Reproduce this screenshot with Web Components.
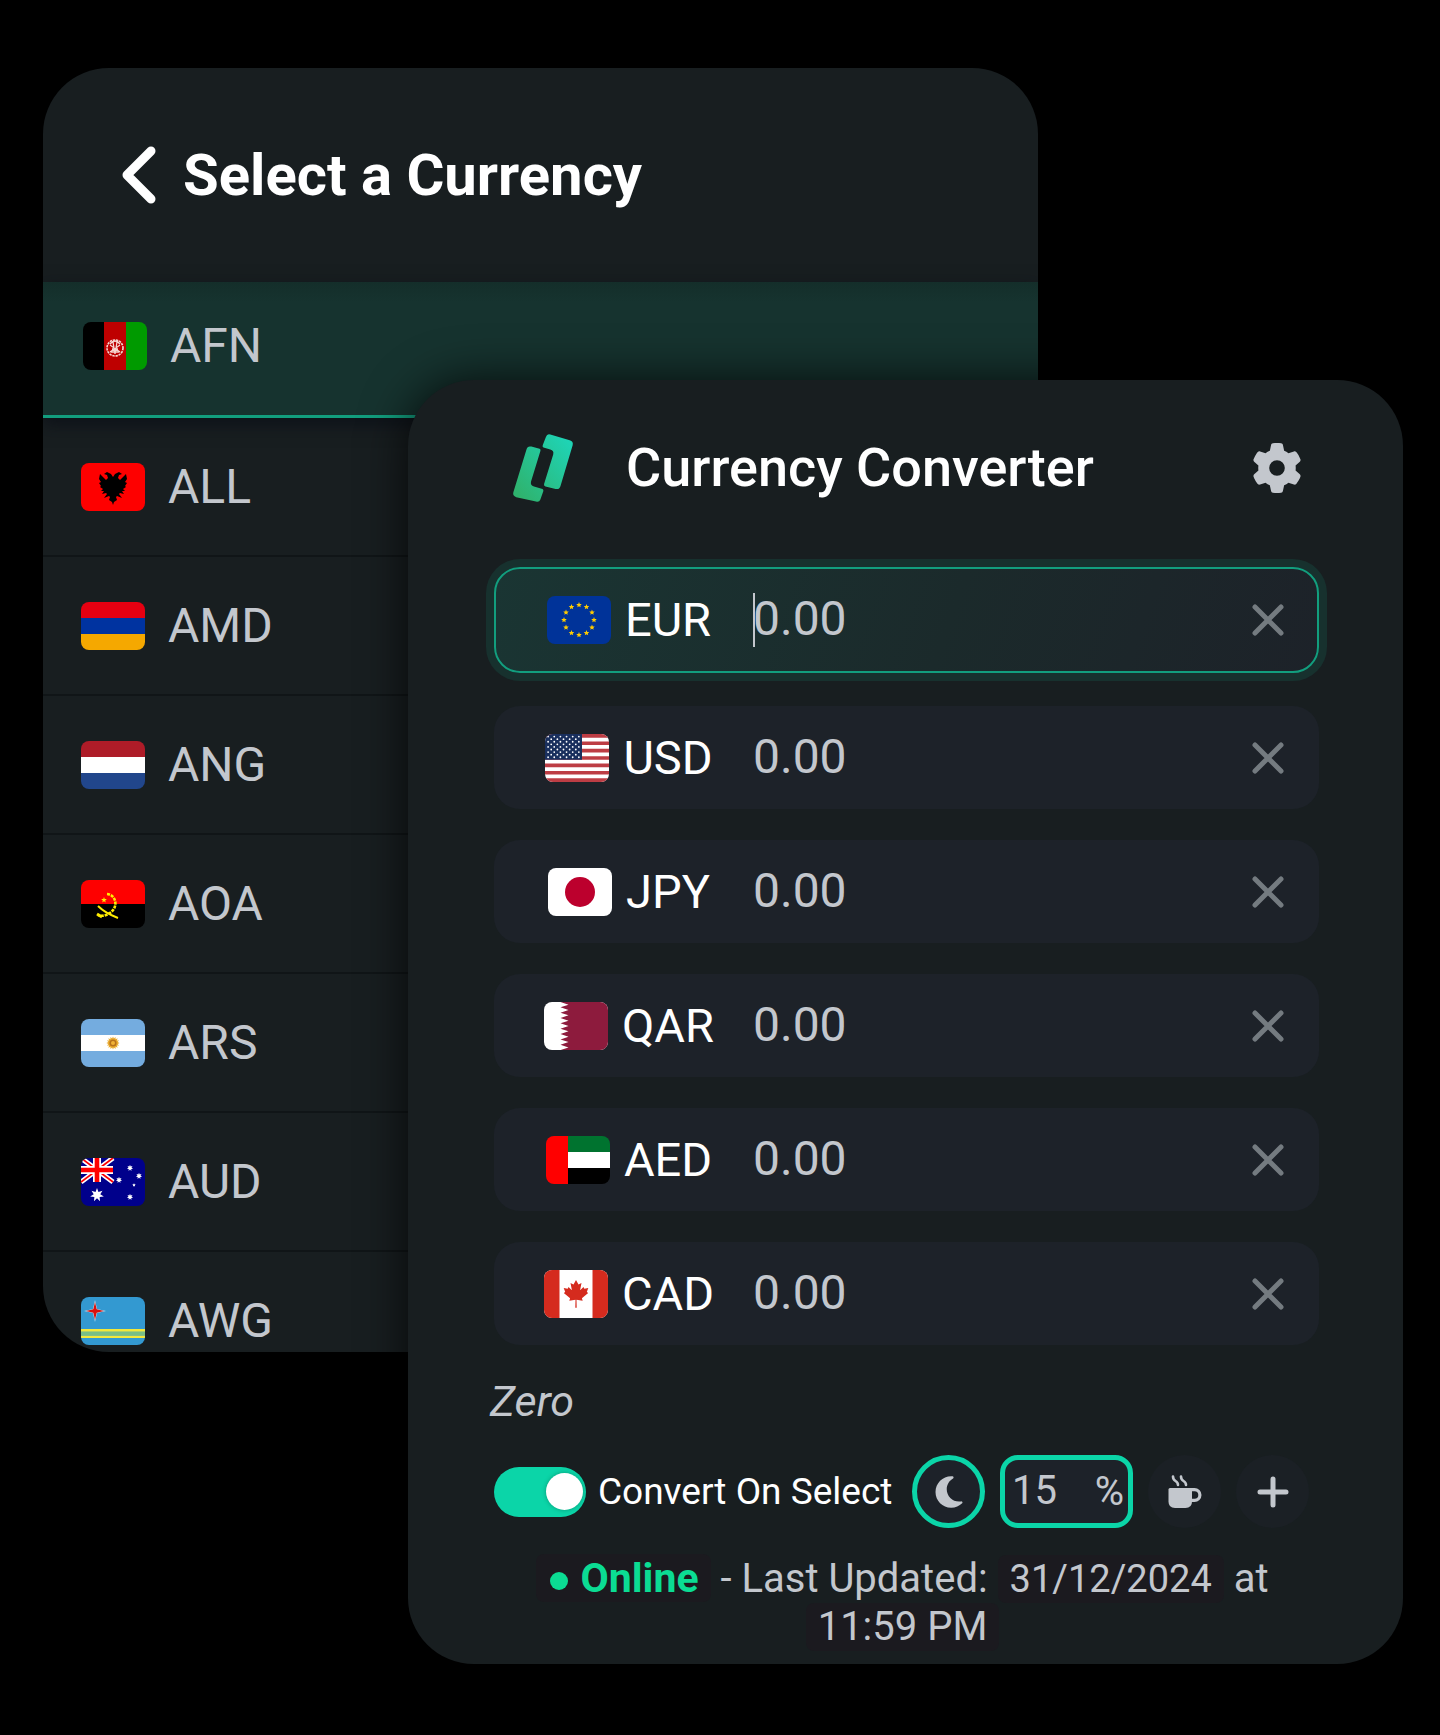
<!DOCTYPE html>
<html lang="en">
<head>
<meta charset="utf-8">
<meta name="viewport" content="width=device-width, initial-scale=1">
<title>Currency Converter</title>
<style>
  :root {
    --panel: #181e20;
    --field: #1d2229;
    --accent: #0bd5a8;
    --line: #129e7e;
    --muted: #c3c7cd;
  }
  body {
    margin: 0;
    background: #000;
    color: #fff;
    font-family: Roboto, "Noto Sans", sans-serif;
  }
</style>
</head>
<body>
<app-stage>
  <currency-picker slot="back">
    <currency-option code="AFN" selected></currency-option>
    <currency-option code="ALL"></currency-option>
    <currency-option code="AMD"></currency-option>
    <currency-option code="ANG"></currency-option>
    <currency-option code="AOA"></currency-option>
    <currency-option code="ARS"></currency-option>
    <currency-option code="AUD"></currency-option>
    <currency-option code="AWG"></currency-option>
  </currency-picker>
  <currency-converter slot="front">
    <currency-field code="EUR" active></currency-field>
    <currency-field code="USD"></currency-field>
    <currency-field code="JPY"></currency-field>
    <currency-field code="QAR"></currency-field>
    <currency-field code="AED"></currency-field>
    <currency-field code="CAD"></currency-field>
    <converter-toolbar slot="tools"></converter-toolbar>
    <sync-status slot="status"></sync-status>
  </currency-converter>
</app-stage>

<script>
const define = (name, render) => customElements.define(name, class extends HTMLElement {
  connectedCallback() {
    if (!this.shadowRoot) this.attachShadow({ mode: 'open' }).innerHTML = render(this);
  }
});

/* Star with n points, as a polygon's points attribute */
const star = (cx, cy, r, n, k) => {
  const p = [];
  for (let i = 0; i < n * 2; i++) {
    const a = Math.PI * i / n - Math.PI / 2, d = i % 2 ? r * k : r;
    p.push((cx + d * Math.cos(a)).toFixed(2) + ',' + (cy + d * Math.sin(a)).toFixed(2));
  }
  return p.join(' ');
};
const bars = (...c) => c.map((f, i) => `<path fill="${f}" d="M0 ${i * 16}h64v16H0z"/>`).join('');

/* Flags are drawn in a 64 x 48 box */
const FLAGS = {
  AFN: `<path d="M0 0h21v48H0z"/><path fill="#be0000" d="M21 0h22v48H21z"/><path fill="#009a00" d="M43 0h21v48H43z"/>
    <g fill="none" stroke="#f6d5d0"><circle cx="32" cy="26" r="8" stroke-width="1.6" stroke-dasharray="2.4 .8"/><path d="M27 22q5-6 10 0M27 23l10 7M37 23l-10 7M28 30h8M29 27h6M30 20l2 12 2-12" stroke-width="1.3"/></g>`,
  ALL: `<path fill="#fe0000" d="M0 0h64v48H0z"/>
    <path d="M32 14l-2-3-4-2-3 2 3 1 1 3-2 2-6-6-1 5 2 3-2 1 2 3-1 1 3 2-2 2 3 0-2 3 4-1 1 1-3 4 5-2 1 1-1 3 3 2 1 3 1-3 3-2-1-3 1-1 5 2-3-4 1-1 4 1-2-3 3 0-2-2 3-2-1-1 2-3-2-1 2-3-1-5-6 6-2-2 1-3 3-1-3-2-4 2z"/>`,
  AMD: bars('#e60011', '#0033a0', '#f5a800'),
  ANG: bars('#ae1c28', '#fff', '#21468b'),
  AOA: `<path fill="#fe0000" d="M0 0h64v24H0z"/><path d="M0 24h64v24H0z"/>
    <g fill="none" stroke="#ffec00" stroke-width="2.6"><path d="M26 14c10 1 12 15 1 20q-5 3-10 1" stroke-dasharray="3 1"/><path d="M17 26q7 7 20 12" stroke-width="2"/><path d="M16 34l5 3" stroke-width="3"/></g><polygon fill="#ffec00" points="${star(23, 20, 3, 5, .42)}"/>`,
  ARS: bars('#74acdf', '#fff', '#74acdf') + `<polygon fill="#e9a92a" points="${star(32, 24, 6.6, 16, .7)}"/><circle cx="32" cy="24" r="3.6" fill="#b8721c"/><circle cx="32" cy="24" r="2" fill="#f0b136"/>`,
  AUD: `<path fill="#00008b" d="M0 0h64v48H0z"/>
    <path stroke="#fff" stroke-width="5" d="M0 0l32 24M32 0L0 24"/><path stroke="#f00" stroke-width="1.7" d="M0 0l32 24M32 0L0 24"/>
    <path stroke="#fff" stroke-width="8" d="M16 0v24M0 12h32"/><path stroke="#f00" stroke-width="4.6" d="M16 0v24M0 12h32"/>
    <g fill="#fff"><polygon points="${star(16, 37, 7, 7, .48)}"/><polygon points="${star(49, 10, 3.2, 7, .5)}"/><polygon points="${star(38, 22, 3.2, 7, .5)}"/><polygon points="${star(58, 18, 3.2, 7, .5)}"/><polygon points="${star(49, 39, 3.2, 7, .5)}"/><polygon points="${star(53, 27, 1.8, 5, .5)}"/></g>`,
  AWG: `<path fill="#3399d1" d="M0 0h64v48H0z"/><path fill="#f4e83a" d="M0 32h64v2.8H0zM0 38.4h64v2.6H0z"/><path fill="#78bf86" d="M0 34.8h64v3.6H0z"/>
    <polygon fill="#c5e4f4" points="${star(14, 14, 11, 4, .26)}"/><polygon fill="#d9100d" points="${star(14, 14, 9, 4, .26)}"/>`,
  EUR: `<path fill="#039" d="M0 0h64v48H0z"/><g fill="#fc0">${Array.from({ length: 12 }, (_, i) =>
    `<polygon points="${star(32 + 15 * Math.cos(i * Math.PI / 6), 24 + 15 * Math.sin(i * Math.PI / 6), 2.9, 5, .46)}"/>`).join('')}</g>`,
  USD: `<path fill="#fff" d="M0 0h64v48H0z"/>${Array.from({ length: 7 }, (_, i) =>
    `<path fill="#bd3d44" d="M0 ${(i * 7.385).toFixed(2)}h64v3.69H0z"/>`).join('')}<path fill="#192f5d" d="M0 0h37v25.85H0z"/>
    <g fill="#fff">${Array.from({ length: 9 }, (_, r) => Array.from({ length: r % 2 ? 5 : 6 }, (_, c) =>
    `<circle cx="${3.1 + (r % 2 ? 3.1 : 0) + c * 6.15}" cy="${2.6 + r * 2.58}" r=".9"/>`).join('')).join('')}</g>`,
  JPY: `<path fill="#fff" d="M0 0h64v48H0z"/><circle cx="32" cy="24" r="15" fill="#bc002d"/>`,
  QAR: `<path fill="#fff" d="M0 0h64v48H0z"/><path fill="#8d1b3d" d="M64 0H16.5l8 2.67${'l-8 2.67 8 2.67'.repeat(8)}l-8 2.67H64z"/>`,
  AED: `<path fill="#00732f" d="M22 0h42v16H22z"/><path fill="#fff" d="M22 16h42v16H22z"/><path d="M22 32h42v16H22z"/><path fill="#f00" d="M0 0h22v48H0z"/>`,
  CAD: `<path fill="#fff" d="M0 0h64v48H0z"/><path fill="#d52b1e" d="M0 0h15.5v48H0zM48.5 0H64v48H48.5z"/>
    <path fill="#d52b1e" d="M32 10l-2.5 4.5-3-1.5 1.4 7.2-3.4-3.3-.8 1.8-4-.6 1.500 4-1.400 1 6.300 5.200-.8 2.500 6.200-1-.2 8h1.400l-.2-8 6.200 1-.8-2.500 6.300-5.200-1.400-1 1.500-4-4 .6-.8-1.800-3.400 3.300 1.400-7.200-3 1.500z"/>`
};

define('flag-icon', el => `
  <style>
    :host { display: block; flex: none; width: 64px; height: 48px; border-radius: 8px; overflow: hidden; }
    svg { display: block; width: 100%; height: 100%; }
  </style>
  <svg viewBox="0 0 64 48" aria-hidden="true">${FLAGS[el.getAttribute('code')]}</svg>`);

/* Two overlapping cards: they share the middle cell of a 3 x 3 grid */
define('app-stage', () => `
  <style>
    :host {
      display: grid;
      grid-template-columns: 365fr 630fr 365fr;
      grid-template-rows: 312px auto 312px;
      padding: 68px 37px 72px 43px;
    }
    slot { display: contents; }
    ::slotted([slot=back]) { grid-area: 1 / 1 / 3 / 3; }
    ::slotted([slot=front]) { grid-area: 2 / 2 / 4 / 4; }
  </style>
  <slot name="back"></slot><slot name="front"></slot>`);

define('currency-picker', () => `
  <style>
    :host {
      display: flex; flex-direction: column;
      contain: size;
      background: var(--panel);
      border-radius: 66px 66px 0 66px;
      overflow: hidden;
    }
    header {
      display: flex; align-items: center; gap: 26px;
      box-sizing: border-box; flex: none;
      height: 214px; padding: 0 78px;
    }
    button { display: flex; padding: 0; border: 0; background: none; color: inherit; cursor: pointer; }
    svg { display: block; width: 36px; height: 60px; }
    h1 { margin: 0; font-size: 58px; line-height: 64px; font-weight: 700; white-space: nowrap; }
    div { display: flex; flex-direction: column; }
  </style>
  <header>
    <button aria-label="Back"><svg viewBox="0 0 36 60" fill="none" stroke="currentColor" stroke-width="9" stroke-linecap="round" stroke-linejoin="round" aria-hidden="true"><path d="M30 6L6 30l24 24"/></svg></button>
    <h1>Select a Currency</h1>
  </header>
  <div role="list"><slot></slot></div>`);

define('currency-option', el => `
  <style>
    :host { display: block; flex: none; height: 139px; }
    button {
      display: flex; align-items: center; gap: 23px;
      box-sizing: border-box; width: 100%; height: 100%;
      padding: 0 38px;
      border: 0; border-bottom: 2px solid #101517;
      background: none; color: var(--muted);
      font: 48px/56px Roboto, sans-serif; text-align: left; cursor: pointer;
    }
    :host([selected]) { height: 136px; position: relative; }
    :host([selected]) button {
      padding: 0 40px 5px;
      background: linear-gradient(#142e2a, #16332f 20px);
      border-bottom: 3px solid var(--line);
      box-shadow: 0 6px 16px rgba(10, 14, 22, .8);
    }
  </style>
  <button><flag-icon code="${el.getAttribute('code')}"></flag-icon><span>${el.getAttribute('code')}</span></button>`);

define('currency-converter', () => `
  <style>
    :host {
      display: block;
      padding: 0 84px 13px 86px;
      background: var(--panel);
      border-radius: 66px;
      box-shadow: 0 0 48px rgba(0, 0, 0, .75);
      position: relative;
    }
    header {
      display: flex; align-items: center;
      box-sizing: border-box; height: 187px; padding: 0 17px 12px;
    }
    .logo { width: 64px; height: 70px; margin-right: 51px; }
    h2 { margin: 0; font-size: 54px; line-height: 64px; font-weight: 500; white-space: nowrap; }
    button { display: flex; margin-left: auto; padding: 0; border: 0; background: none; color: var(--muted); cursor: pointer; }
    .gear { width: 50px; height: 50px; }
    svg { display: block; }
    .fields { display: flex; flex-direction: column; gap: 31px; }
    .below { margin-left: -8px; }
    p { margin: 31px 0 29px; padding-left: 4px; font: italic 43px/50px Roboto, sans-serif; color: var(--muted); }
  </style>
  <header>
    <svg class="logo" viewBox="0 0 64 72" aria-hidden="true">
      <defs><linearGradient id="g" gradientUnits="userSpaceOnUse" x1="4" y1="60" x2="60" y2="12"><stop offset="0" stop-color="#2fb36e"/><stop offset="1" stop-color="#1fd3b4"/></linearGradient></defs>
      <g fill="url(#g)">
        <path d="M35 4q1-3.500 4.500-2.500l20 6q4 1.200 3 5L50 54.500q-1 4-5 3L34.500 55q-2-.5-1.400-2.500L42.500 22q1-4-3-5L32.500 15q-1.300-.6-.8-2.500z"/>
        <path d="M15 17q1-4 5-3l8.500 2.300q1.300.5.900 2L19.700 50q-1 4 3 5l8.800 2.500q1.300.6.800 2.500l-3 8.500q-1.200 3-4.500 2L4.500 66Q.5 64.800 1.500 61z"/>
      </g>
    </svg>
    <h2>Currency Converter</h2>
    <button aria-label="Settings"><svg class="gear" viewBox="0 0 512 512" fill="currentColor" aria-hidden="true"><path d="M495.900 166.600c3.200 8.700 .5 18.400-6.400 24.600l-43.300 39.400c1.100 8.300 1.700 16.800 1.700 25.400s-.6 17.100-1.700 25.400l43.300 39.400c6.900 6.200 9.600 15.900 6.400 24.600c-4.400 11.900-9.700 23.300-15.800 34.300l-4.700 8.100c-6.600 11-14 21.400-22.100 31.200c-5.900 7.200-15.700 9.600-24.500 6.800l-55.700-17.700c-13.400 10.300-28.200 18.900-44 25.400l-12.500 57.100c-2 9.100-9 16.300-18.200 17.800c-13.800 2.300-28 3.500-42.500 3.500s-28.700-1.200-42.500-3.500c-9.200-1.500-16.200-8.700-18.200-17.800l-12.500-57.100c-15.800-6.500-30.600-15.100-44-25.400L83.100 425.900c-8.800 2.800-18.600 .3-24.500-6.800c-8.100-9.800-15.500-20.200-22.100-31.200l-4.700-8.100c-6.100-11-11.400-22.400-15.800-34.300c-3.200-8.700-.5-18.400 6.400-24.600l43.300-39.400C64.600 273.100 64 264.600 64 256s.6-17.100 1.700-25.400L22.400 191.200c-6.900-6.200-9.600-15.900-6.400-24.600c4.400-11.900 9.700-23.300 15.800-34.300l4.700-8.100c6.600-11 14-21.400 22.100-31.200c5.900-7.200 15.700-9.600 24.500-6.800l55.700 17.700c13.400-10.300 28.200-18.900 44-25.400l12.500-57.100c2-9.100 9-16.300 18.200-17.800C227.300 1.200 241.500 0 256 0s28.700 1.200 42.500 3.500c9.200 1.500 16.200 8.700 18.200 17.800l12.500 57.100c15.800 6.500 30.600 15.100 44 25.400l55.700-17.700c8.800-2.800 18.600-.3 24.500 6.800c8.100 9.800 15.500 20.200 22.100 31.200l4.700 8.100c6.100 11 11.400 22.400 15.800 34.300zM256 336a80 80 0 1 0 0-160 80 80 0 1 0 0 160z"/></svg></button>
  </header>
  <div class="fields"><slot></slot></div>
  <div class="below"><p>Zero</p></div>
  <slot name="tools"></slot>
  <div class="below"><slot name="status"></slot></div>`);

define('currency-field', el => {
  const code = el.getAttribute('code');
  return `
  <style>
    :host {
      display: flex; align-items: center;
      box-sizing: border-box; height: 103px; padding: 0 32px 0 34px;
      background: var(--field); border-radius: 26px;
    }
    :host([active]) {
      height: 106px; margin-bottom: 2px; padding: 0 30px 0 32px;
      border: 2px solid var(--line);
      background: linear-gradient(110deg, #1a3533, #1b2a2b 55%, #1d2229);
      box-shadow: 0 0 0 8px #17312e;
    }
    .code {
      display: flex; align-items: center; justify-content: center; gap: 14px;
      width: 202px; padding: 0; border: 0; background: none; color: #fff;
      font: 47px/56px Roboto, sans-serif; cursor: pointer;
    }
    .caret { width: 2px; height: 54px; margin: 0 -2px 0 23px; background: #c3c7cd; visibility: hidden; }
    :host([active]) .caret { visibility: visible; }
    input {
      flex: 1; min-width: 0; padding: 0 0 2px; border: 0; outline: 0; background: none;
      color: var(--muted); font: 48px/56px Roboto, sans-serif;
    }
    .clear { display: flex; padding: 0; border: 0; background: none; color: #747b80; cursor: pointer; }
    svg { display: block; width: 38px; height: 38px; }
  </style>
  <button class="code" aria-label="Change ${code}"><flag-icon code="${code}"></flag-icon><span>${code}</span></button>
  <span class="caret"></span>
  <input type="text" inputmode="decimal" value="0.00" aria-label="Amount in ${code}">
  <button class="clear" aria-label="Remove ${code}"><svg viewBox="0 0 38 38" stroke="currentColor" stroke-width="5" stroke-linecap="round" aria-hidden="true"><path d="M6 6l26 26M32 6L6 32"/></svg></button>`;
});

define('converter-toolbar', () => `
  <style>
    :host { display: flex; align-items: center; gap: 15px; padding-right: 10px; }
    label { display: flex; align-items: center; gap: 12px; margin-right: auto; font-size: 37px; line-height: 48px; white-space: nowrap; cursor: pointer; }
    .switch {
      appearance: none; display: flex; align-items: center; justify-content: flex-end;
      box-sizing: border-box; width: 92px; height: 50px; margin: 0; padding: 0 3px;
      border-radius: 25px; background: var(--accent); cursor: pointer;
    }
    .switch::before { content: ""; width: 37px; height: 37px; border-radius: 50%; background: #fff; box-shadow: 0 0 4px rgba(0, 60, 45, .4); }
    button {
      display: flex; align-items: center; justify-content: center;
      box-sizing: border-box; flex: none; width: 73px; height: 73px; padding: 0;
      border: 0; border-radius: 50%; background: #1b2025; color: var(--muted); cursor: pointer;
    }
    .on { border: 5px solid var(--accent); background: var(--field); }
    .rate {
      display: flex; align-items: center; justify-content: space-between;
      box-sizing: border-box; width: 133px; height: 73px; padding: 0 4px 0 7px; margin: 0;
      border: 5px solid var(--accent); border-radius: 18px; background: var(--field);
      color: var(--muted); font-size: 40px; line-height: 48px;
    }
    .rate input { width: 56px; padding: 0 0 2px; border: 0; outline: 0; background: none; color: inherit; font: 40px/48px Roboto, sans-serif; }
    svg { display: block; }
  </style>
  <label><input class="switch" type="checkbox" checked>Convert On Select</label>
  <button class="on" aria-label="Dark mode"><svg width="28" height="36" viewBox="0 0 384 512" fill="currentColor" aria-hidden="true"><path d="M223.500 32C100 32 0 132.300 0 256S100 480 223.500 480c60.600 0 115.500-24.200 155.800-63.400c5-4.900 6.300-12.500 3.100-18.700s-10.100-9.700-17-8.500c-9.800 1.700-19.800 2.600-30.100 2.600c-96.900 0-175.500-78.800-175.500-176c0-65.800 36-123.100 89.300-153.300c6.100-3.500 9.200-10.500 7.700-17.300s-7.300-11.900-14.300-12.500c-6.300-.5-12.600-.8-19-.8z"/></svg></button>
  <div class="rate"><input type="text" inputmode="numeric" value="15" aria-label="Fee percentage"><span>%</span></div>
  <button aria-label="Buy a coffee"><svg width="34" height="34" viewBox="0 0 34 34" fill="none" stroke="currentColor" aria-hidden="true"><path d="M5 1.500q0 3 2.500 4.500t2.500 4M13 1.500q0 3 2.500 4.500t2.500 4" stroke-width="2.600" stroke-linecap="round"/><path d="M2 13h22v13.500q0 6.500-6.500 6.500H7q-6.500 0-6.500-6.500V14.500Q.5 13 2 13z" fill="currentColor" stroke="none"/><path d="M23 14.600h3.500a5 5 0 0 1 0 10.800H23" stroke-width="3.200"/></svg></button>
  <button aria-label="Add a currency"><svg width="36" height="36" viewBox="0 0 36 36" stroke="currentColor" stroke-width="5" stroke-linecap="round" aria-hidden="true"><path d="M18 5v26M5 18h26"/></svg></button>`);

define('sync-status', () => `
  <style>
    :host { display: block; margin-top: 26px; text-align: center; color: var(--muted); font-size: 40px; line-height: 48px; }
    .chip { display: inline-block; padding: 0 12px; border-radius: 8px; background: #1b1a1f; }
    .online { color: #0bdc93; font-size: 41px; font-weight: 700; padding-left: 14px; }
    .online::before { content: ""; display: inline-block; width: 18px; height: 18px; margin-right: 12px; border-radius: 50%; background: currentColor; vertical-align: 2px; }
    .date { font-size: 38px; }
  </style>
  <span class="chip online">Online</span> - Last Updated: <span class="chip date">31/12/2024</span> at <span class="chip">11:59 PM</span>`);
</script>
</body>
</html>
